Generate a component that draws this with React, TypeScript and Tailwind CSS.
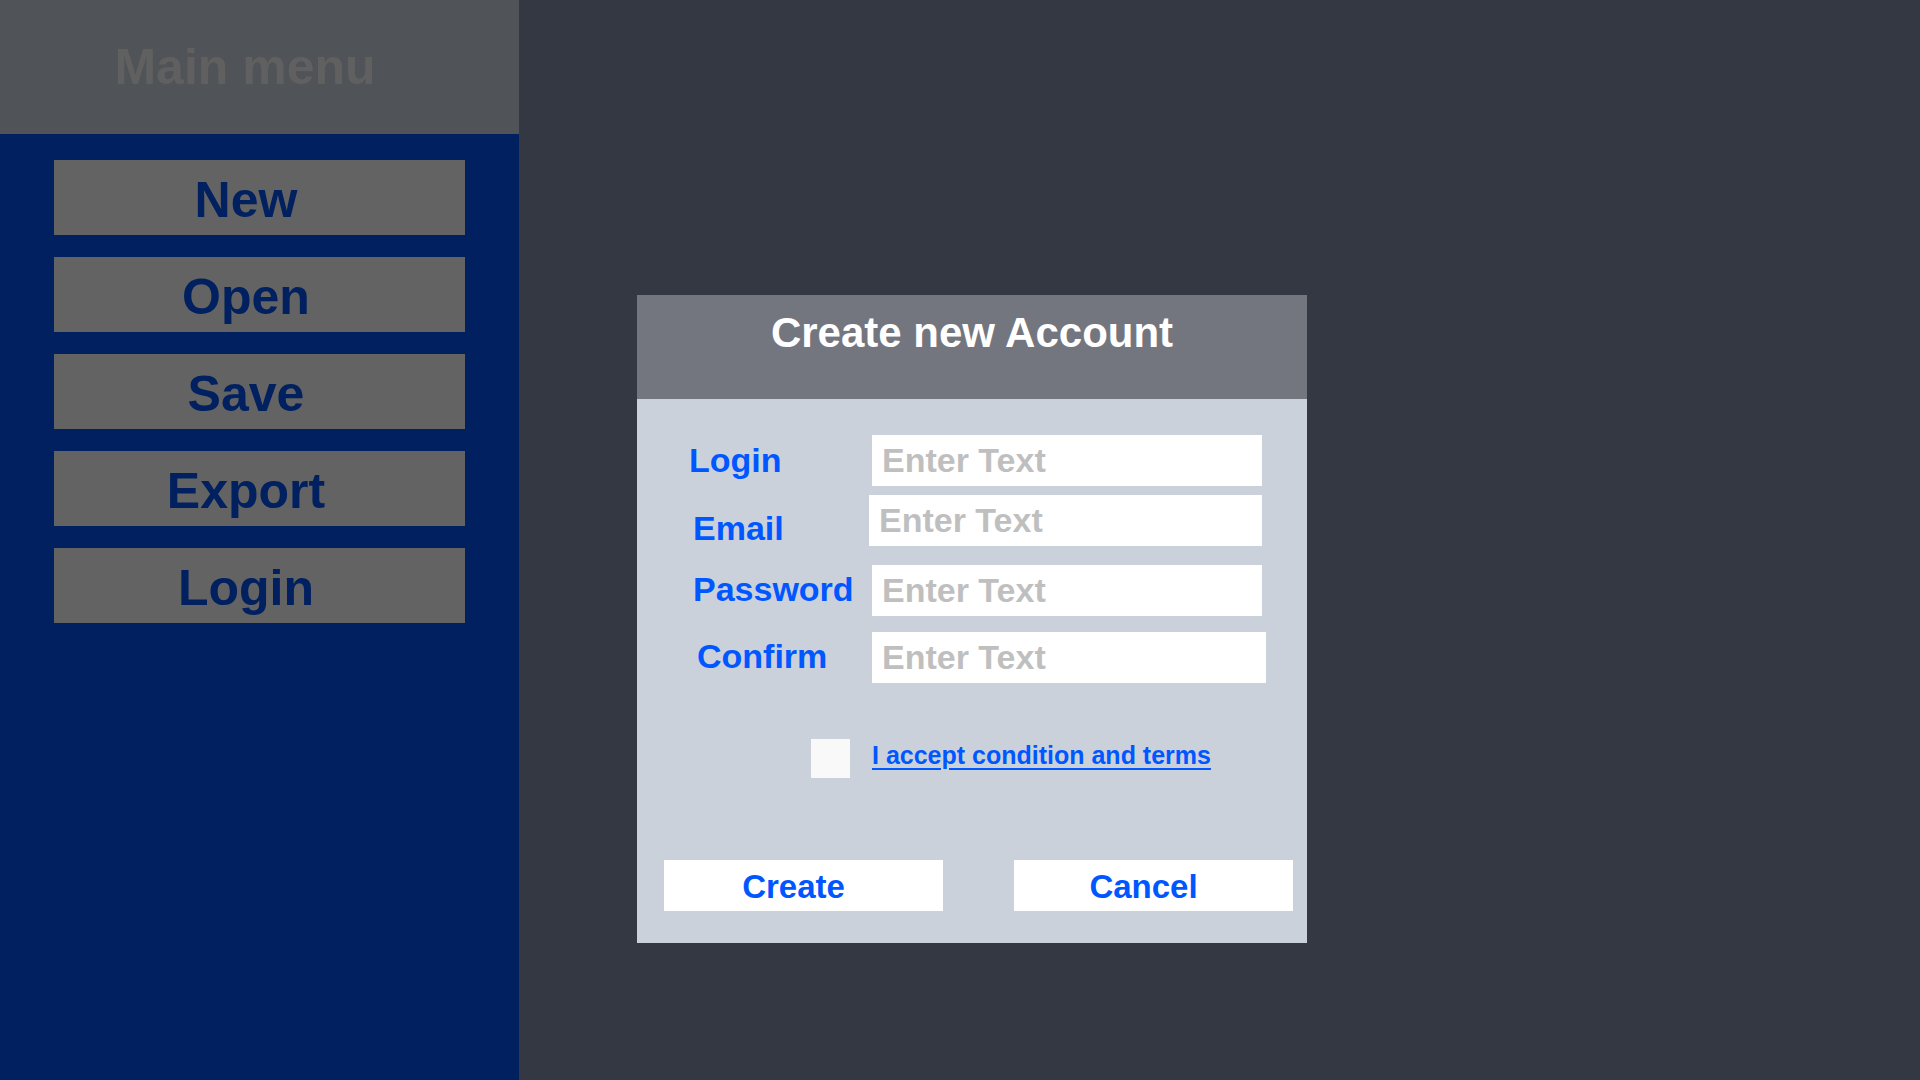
import { useState } from "react";

const MENU_ITEMS = ["New", "Open", "Save", "Export", "Login"] as const;

const FIELDS = [
  { label: "Login", labelClass: "ml-[52px] mt-[8px]", inputClass: "ml-[235px] w-[390px]", gap: "" },
  { label: "Email", labelClass: "ml-[56px] mt-[16px]", inputClass: "ml-[232px] w-[393px]", gap: "mt-[9px]" },
  { label: "Password", labelClass: "ml-[56px] mt-[7px]", inputClass: "ml-[235px] w-[390px]", gap: "mt-[19px]" },
  { label: "Confirm", labelClass: "ml-[60px] mt-[7px]", inputClass: "ml-[235px] w-[394px]", gap: "mt-[16px]" },
] as const;

function Sidebar() {
  return (
    <aside className="flex h-full w-[519px] shrink-0 flex-col bg-[#002060]">
      <div className="flex h-[134px] items-center justify-center bg-[#505357] pr-[29px]">
        <h1 className="text-[50px] font-bold leading-none text-[#606060]">Main menu</h1>
      </div>
      <nav className="flex flex-col gap-[22px] pl-[54px] pt-[26px]">
        {MENU_ITEMS.map((item) => (
          <button
            key={item}
            type="button"
            className="flex h-[75px] w-[411px] items-center justify-center bg-[#636363] pr-[27px] pt-[5px] text-[50px] font-bold leading-none text-[#002060]"
          >
            {item}
          </button>
        ))}
      </nav>
    </aside>
  );
}

function CreateAccountDialog() {
  const [accepted, setAccepted] = useState(false);

  return (
    <div className="flex w-[670px] flex-col">
      <div className="h-[104px] bg-[#74767f] pt-[17px] text-center">
        <h2 className="text-[42px] font-bold leading-none text-white">Create new Account</h2>
      </div>
      <div className="flex flex-col bg-[#cbd1db] pb-[32px] pt-[36px]">
        {FIELDS.map(({ label, labelClass, inputClass, gap }) => (
          <div key={label} className={`relative flex h-[51px] items-start ${gap}`}>
            <label className={`absolute left-0 top-0 text-[34px] font-bold leading-none text-[#0057ff] ${labelClass}`}>
              {label}
            </label>
            <input
              type={label === "Password" || label === "Confirm" ? "password" : "text"}
              placeholder="Enter Text"
              className={`h-[51px] bg-white pl-[10px] text-[34px] font-bold text-[#333] outline-none placeholder:text-[#bfbfbf] ${inputClass}`}
            />
          </div>
        ))}

        <div className="mt-[56px] flex items-start">
          <button
            type="button"
            aria-pressed={accepted}
            onClick={() => setAccepted(!accepted)}
            className="ml-[174px] h-[39px] w-[39px] bg-[#f9f9f9] text-[28px] leading-none text-[#0057ff]"
          >
            {accepted ? "✓" : ""}
          </button>
          <a
            href="#"
            className="ml-[22px] mt-[4px] text-[25px] font-bold leading-none text-[#0057ff] underline decoration-2 underline-offset-[4px]"
          >
            I accept condition and terms
          </a>
        </div>

        <div className="mt-[82px] flex gap-[71px] pl-[27px]">
          {["Create", "Cancel"].map((label) => (
            <button
              key={label}
              type="button"
              className="flex h-[51px] w-[279px] items-center justify-center bg-white pr-[20px] pt-[2px] text-[33px] font-bold leading-none text-[#0057ff]"
            >
              {label}
            </button>
          ))}
        </div>
      </div>
    </div>
  );
}

export default function App() {
  return (
    <div className="flex h-[1080px] w-full overflow-hidden bg-[#343843] font-['Liberation_Sans',Arial,sans-serif]">
      <Sidebar />
      <main className="flex-1 pl-[118px] pt-[295px]">
        <CreateAccountDialog />
      </main>
    </div>
  );
}
